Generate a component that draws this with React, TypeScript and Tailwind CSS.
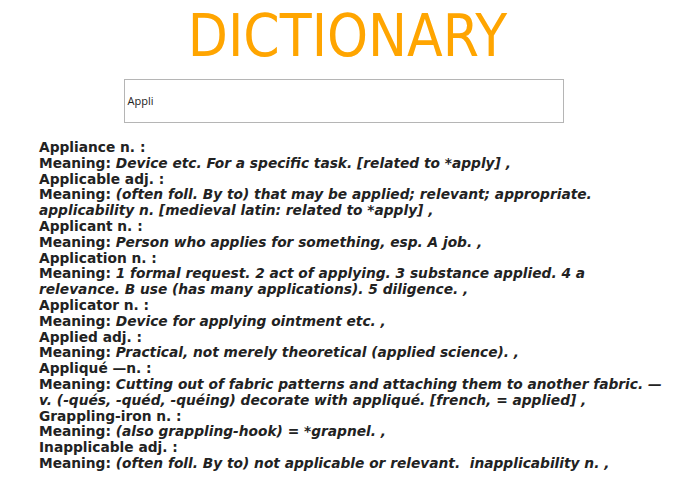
import React from "react"

const entries: { word: string; meaning: string }[] = [
  { word: "Appliance n. :", meaning: "Device etc. For a specific task. [related to *apply] ," },
  {
    word: "Applicable adj. :",
    meaning:
      "(often foll. By to) that may be applied; relevant; appropriate. applicability n. [medieval latin: related to *apply] ,",
  },
  { word: "Applicant n. :", meaning: "Person who applies for something, esp. A job. ," },
  {
    word: "Application n. :",
    meaning:
      "1 formal request. 2 act of applying. 3 substance applied. 4 a relevance. B use (has many applications). 5 diligence. ,",
  },
  { word: "Applicator n. :", meaning: "Device for applying ointment etc. ," },
  { word: "Applied adj. :", meaning: "Practical, not merely theoretical (applied science). ," },
  {
    word: "Appliqué —n. :",
    meaning:
      "Cutting out of fabric patterns and attaching them to another fabric. — v. (-qués, -quéd, -quéing) decorate with appliqué. [french, = applied] ,",
  },
  { word: "Grappling-iron n. :", meaning: "(also grappling-hook) = *grapnel. ," },
  { word: "Inapplicable adj. :", meaning: "(often foll. By to) not applicable or relevant.\u00a0 inapplicability n. ," },
]

export default function App() {
  return (
    <div className="min-h-[494px] w-[695px] bg-white">
      <h1 className="pt-[2px] text-center font-['DejaVu_Sans_Condensed','DejaVu_Sans',sans-serif] text-[58px] leading-[68px] text-[#ffa500]">
        DICTIONARY
      </h1>
      <div className="mt-[9px] flex justify-center">
        <div className="ml-[-8px] flex h-[44px] w-[440px] items-center border border-[#b5b5b5] px-[3px] font-['Open_Sans',sans-serif] text-[11px] text-[#222]">
          Appli
        </div>
      </div>
      <div className="mt-[17px] w-[662px] pl-[39px] font-['DejaVu_Sans',sans-serif] text-[13.75px] font-bold leading-[15.8px] text-[#222]">
        {entries.map((e) => (
          <div key={e.word}>
            <div>{e.word}</div>
            <div>
              Meaning: <i>{e.meaning}</i>
            </div>
          </div>
        ))}
      </div>
    </div>
  )
}
